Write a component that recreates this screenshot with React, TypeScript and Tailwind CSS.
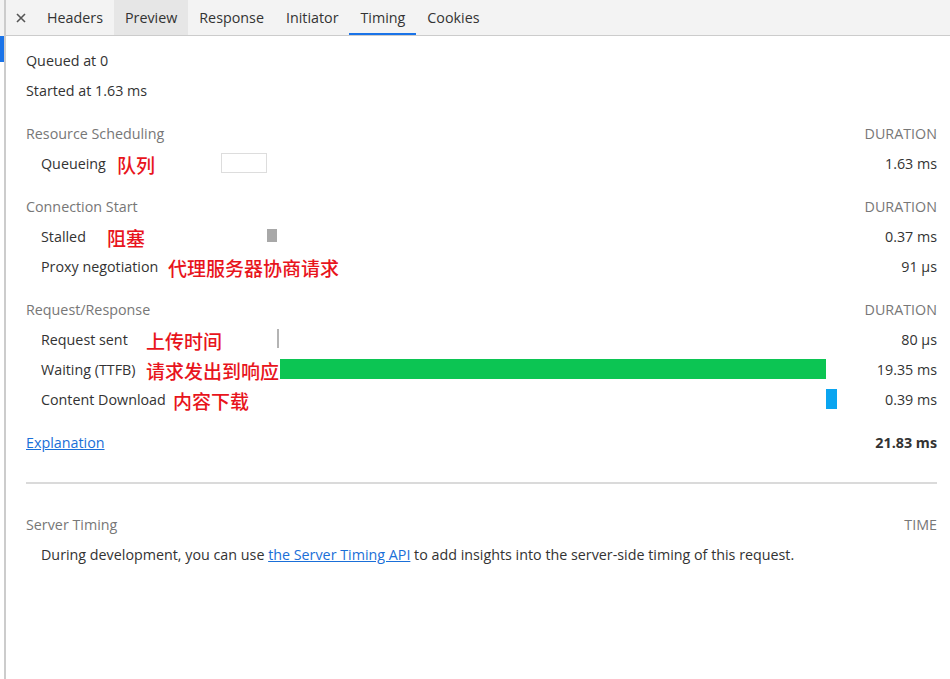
import type { ReactNode } from "react";

const tabs = ["Headers", "Preview", "Response", "Initiator", "Timing", "Cookies"];

// Escala de la línea de tiempo: 616px para el total de 21.83 ms.
const TOTAL = 21.83;
const ANCHO = 616;
const px = (ms: number) => (ms / TOTAL) * ANCHO;

type Fila = {
  label: string;
  nota: string;
  notaX: string;
  desde?: number;
  dur?: number;
  barra?: string;
  valor: string;
};

const secciones: { titulo: string; filas: Fila[] }[] = [
  {
    titulo: "Resource Scheduling",
    filas: [
      { label: "Queueing", nota: "队列", notaX: "left-[91px]", desde: 0, dur: 1.63, barra: "bg-white border border-[#dddddd] h-[20px] top-[4px]", valor: "1.63 ms" },
    ],
  },
  {
    titulo: "Connection Start",
    filas: [
      { label: "Stalled", nota: "阻塞", notaX: "left-[81px]", desde: 1.63, dur: 0.37, barra: "bg-[#a8a8a8] h-[13px] top-[7px]", valor: "0.37 ms" },
      { label: "Proxy negotiation", nota: "代理服务器协商请求", notaX: "left-[142px]", valor: "91 µs" },
    ],
  },
  {
    titulo: "Request/Response",
    filas: [
      { label: "Request sent", nota: "上传时间", notaX: "left-[120px]", desde: 2.0, dur: 0.05, barra: "bg-[#b4b4b4] h-[19px] top-[4px]", valor: "80 µs" },
      { label: "Waiting (TTFB)", nota: "请求发出到响应", notaX: "left-[120px]", desde: 2.08, dur: 19.35, barra: "bg-[#0cc553] h-[20px] top-[4px]", valor: "19.35 ms" },
      { label: "Content Download", nota: "内容下载", notaX: "left-[147px]", desde: 21.43, dur: 0.4, barra: "bg-[#0aa5f0] h-[20px] top-[4px]", valor: "0.39 ms" },
    ],
  },
];

export default function App() {
  return (
    <div
      className="flex h-[679px] w-[950px] overflow-hidden bg-white text-[14.3px] text-[#333333]"
      style={{ fontFamily: '"Open Sans", "Noto Sans", sans-serif' }}
    >
      {/* Franja del panel izquierdo, con la fila seleccionada en azul */}
      <div className="flex w-[4px] flex-col">
        <div className="h-[36px] bg-[#f3f3f3]" />
        <div className="h-[26px] bg-[#1a73e8]" />
      </div>
      <div className="w-[2px] bg-[#cccccc]" />

      <div className="flex flex-1 flex-col">
        <div className="flex h-[36px] items-stretch border-b border-[#cccccc] bg-[#f3f3f3]">
          <div className="flex w-[30px] items-center justify-center text-[#555555]">
            <svg width="10" height="10" viewBox="0 0 10 10" stroke="currentColor" strokeWidth="1.6">
              <path d="M1 1l8 8M9 1 1 9" />
            </svg>
          </div>
          {tabs.map((t) => (
            <div
              key={t}
              className={`relative flex items-center px-[11px] ${t === "Preview" ? "bg-[#e6e6e6]" : ""}`}
            >
              {t}
              {t === "Timing" && <span className="absolute inset-x-0 bottom-0 h-[2px] bg-[#1a73e8]" />}
            </div>
          ))}
        </div>

        <div className="pl-[20px] pr-[13px] pt-[10px]">
          <div className="leading-[30px]">Queued at 0</div>
          <div className="leading-[30px]">Started at 1.63 ms</div>

          {secciones.map((s) => (
            <div key={s.titulo} className="mt-[13px]">
              <Cabecera titulo={s.titulo} derecha="DURATION" />
              {s.filas.map((f) => (
                <div key={f.label} className="relative grid h-[30px] grid-cols-[195px_616px_1fr] items-center">
                  <div className="pl-[15px]">{f.label}</div>
                  <div className="relative h-full">
                    {f.barra && f.desde !== undefined && f.dur !== undefined && (
                      <div
                        className={`absolute ${f.barra}`}
                        style={{ left: px(f.desde), width: Math.max(1.5, px(f.dur)) }}
                      />
                    )}
                  </div>
                  <div className="text-right">{f.valor}</div>
                  <Nota className={f.notaX}>{f.nota}</Nota>
                </div>
              ))}
            </div>
          ))}

          <div className="mt-[13px] flex h-[30px] items-center justify-between">
            <a className="text-[#1a6fd8] underline">Explanation</a>
            <span className="font-bold">21.83 ms</span>
          </div>

          <div className="mt-[24px] h-[2px] bg-[#dadada]" />

          <div className="mt-[26px]">
            <Cabecera titulo="Server Timing" derecha="TIME" />
            <div className="h-[30px] pl-[15px] leading-[30px]">
              During development, you can use{" "}
              <a className="text-[#1a6fd8] underline">the Server Timing API</a> to add insights into the
              server-side timing of this request.
            </div>
          </div>
        </div>
      </div>
    </div>
  );
}

function Cabecera({ titulo, derecha }: { titulo: string; derecha: string }) {
  return (
    <div className="flex h-[30px] items-center justify-between text-[#777777]">
      <span>{titulo}</span>
      <span>{derecha}</span>
    </div>
  );
}

// Anotaciones en rojo pintadas encima de la captura.
function Nota({ className, children }: { className: string; children: ReactNode }) {
  return (
    <span
      className={`absolute top-[1px] bg-white text-[19px] font-medium leading-[30px] text-[#e8141c] ${className}`}
      style={{ fontFamily: '"Noto Sans CJK SC", sans-serif' }}
    >
      {children}
    </span>
  );
}
